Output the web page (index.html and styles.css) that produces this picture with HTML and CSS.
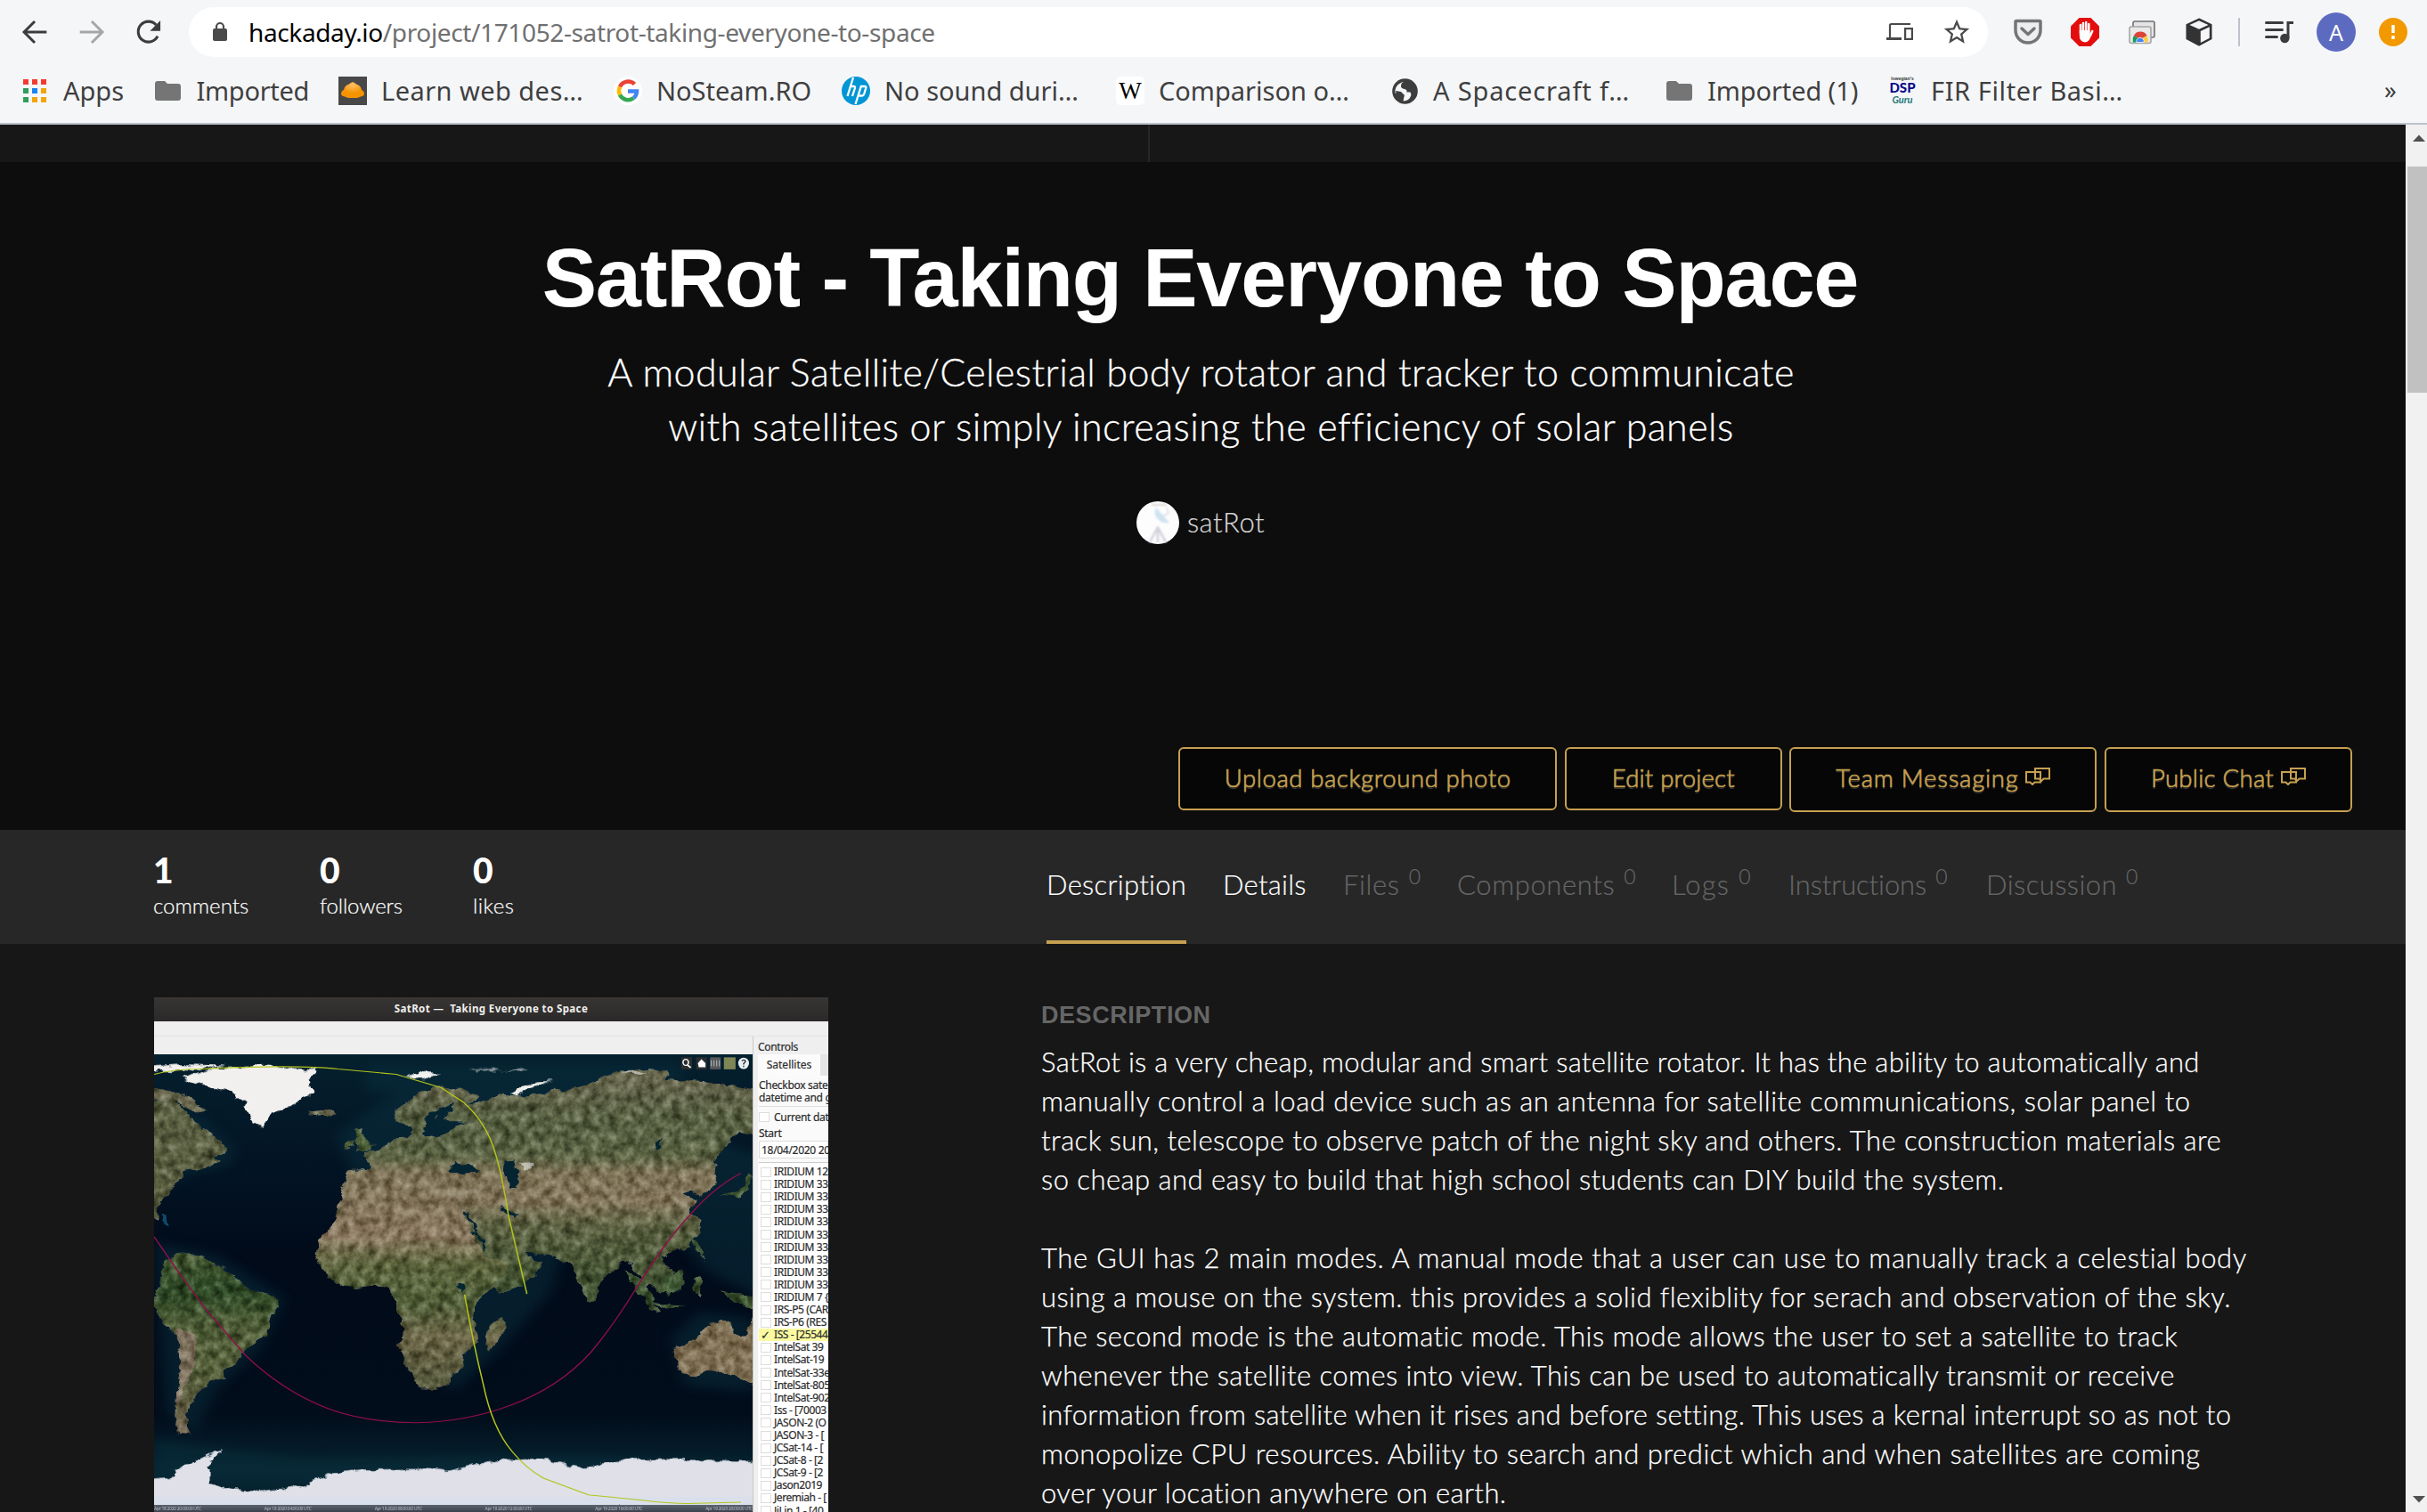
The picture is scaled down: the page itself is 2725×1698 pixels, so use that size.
FILE: index.html
```html
<!DOCTYPE html>
<html lang="en">
<head>
<meta charset="utf-8">
<title>SatRot - Taking Everyone to Space</title>
<link rel="stylesheet" href="styles.css">
</head>
<body>
<header class="chrome">
  <div class="toolbar">
    <nav class="nav">
      <span class="cell"><svg width="32" height="32" viewBox="0 0 24 24"><path d="M22 12H3.5M12 3l-9 9 9 9" fill="none" stroke="#3c3c3c" stroke-width="2.2"/></svg></span>
      <span class="cell"><svg width="32" height="32" viewBox="0 0 24 24"><path d="M2 12h18.500M12 3l9 9-9 9" fill="none" stroke="#a6a6a6" stroke-width="2.2"/></svg></span>
      <span class="cell"><svg width="32" height="32" viewBox="0 0 24 24"><path d="M19.500 15.500A8.600 8.600 0 1 1 18.200 6" fill="none" stroke="#3c3c3c" stroke-width="2.3"/><path d="M21.800 2.300v8.700h-8.700z" fill="#3c3c3c"/></svg></span>
    </nav>
    <div class="omnibox">
      <svg class="lock" width="18" height="24" viewBox="0 0 18 24"><rect x="1" y="8" width="16" height="14" rx="2" fill="#4a4a4a"/><path d="M5 9V6a4 4 0 0 1 8 0v3" fill="none" stroke="#4a4a4a" stroke-width="2.200"/></svg>
      <span class="url">hackaday.io<span class="path">/project/171052-satrot-taking-everyone-to-space</span></span>
      <span class="cell"><svg width="30" height="22" viewBox="0 0 30 22"><path d="M4 17V3.500Q4 2 5.500 2H27" fill="none" stroke="#4a4a4a" stroke-width="2.200"/><path d="M0 17h17v3H0z" fill="#4a4a4a"/><rect x="21.100" y="7.100" width="7.800" height="11.800" fill="none" stroke="#4a4a4a" stroke-width="2.200"/></svg></span>
      <span class="cell"><svg width="34" height="34" viewBox="0 0 24 24"><path d="M22 9.240l-7.190-.62L12 2 9.190 8.630 2 9.240l5.460 4.730L5.820 21 12 17.270 18.180 21l-1.630-7.030L22 9.240zM12 15.400l-3.760 2.270 1-4.280-3.320-2.880 4.380-.38L12 6.100l1.710 4.040 4.380.38-3.320 2.880 1 4.280L12 15.400z" fill="#4a4a4a"/></svg></span>
    </div>
    <div class="extensions">
      <span class="cell"><svg width="32" height="30" viewBox="0 0 32 30"><path d="M3 2.500h26q1 0 1 1V13a14 14 0 0 1-28 0V3.500q0-1 1-1z" fill="#eceeef" stroke="#757575" stroke-width="3.500"/><path d="M9 11l7 6.500 7-6.500" fill="none" stroke="#757575" stroke-width="3.500" stroke-linecap="round" stroke-linejoin="round"/></svg></span>
      <span class="cell"><svg width="32" height="32" viewBox="0 0 32 32"><path d="M9.500 0h13L32 9.500v13L22.500 32h-13L0 22.500v-13z" fill="#e40d0d"/><path d="M11 17V8M14 16V6M17.200 16V5M20.300 16V7M22 20l2.200-5" stroke="#fff" stroke-width="2.500" stroke-linecap="round"/><path d="M9.800 14h11.700v3l1.500 1q-1 9-7 9.500-6.500-.5-6.200-8z" fill="#fff"/></svg></span>
      <span class="cell"><svg width="30" height="27" viewBox="0 0 30 27"><rect x="5" y="1" width="24" height="18" rx="2" fill="#e5e5e5" stroke="#707070" stroke-width="1.600"/><rect x="1" y="7" width="24" height="18.500" rx="2" fill="#e9e9e9" stroke="#a5a5a5" stroke-width="1.600"/><path d="M13 21.500L5.800 17a8.400 8.400 0 0 1 14.800 0z" fill="#db4437"/><path d="M13 21.500L5.800 17Q4 20 4.800 24.500H12z" fill="#0f9d58"/><path d="M13 21.500l7.600-4.500q1.800 4 1 7.500H13z" fill="#ffcd40"/><path d="M8.800 24.500a4.300 4.300 0 1 1 8.400 0z" fill="#4285f4" stroke="#fff" stroke-width=".8"/></svg></span>
      <span class="cell"><svg width="32" height="34" viewBox="0 0 32 34"><path d="M16 2.500L29.500 9v15.500L16 31.500 2.500 24.500V9z" fill="#333" stroke="#333" stroke-width="2"/><path d="M16 4.200L26.500 9 16 13.800 5.500 9z" fill="#f5f6f8"/><path d="M17.800 16l10-4.700v12.500l-10 5.200z" fill="#f5f6f8"/></svg></span>
      <span class="divider"></span>
      <span class="cell"><svg width="32" height="26" viewBox="0 0 32 26"><path d="M1.500 2.500h18M1.500 10.500h18M1.500 18.500h12" stroke="#3c3c3c" stroke-width="3" stroke-linecap="round"/><circle cx="22.300" cy="20" r="5.200" fill="#3c3c3c"/><path d="M26 20V2.500h6" fill="none" stroke="#3c3c3c" stroke-width="3"/></svg></span>
      <span class="cell"><span class="profile">A</span></span>
      <span class="cell"><svg width="32" height="32" viewBox="0 0 32 32"><circle cx="16" cy="16" r="16" fill="#f29900"/><path d="M14.300 8h3.400v9h-3.400zM14.300 20h3.400v4h-3.400z" fill="#fff"/></svg></span>
    </div>
  </div>
  <div class="bookmarks">
    <span class="bm w-apps"><span class="fav"><svg width="26" height="26" viewBox="0 0 26 26"><path d="M0 0h6v6H0zM10 0h6v6h-6zM20 0h6v6h-6z" fill="#f33b30"/><path d="M0 10h6v6H0zM0 20h6v6H0z" fill="#2f9e5a"/><path d="M10 10h6v6h-6z" fill="#1a84f2"/><path d="M20 10h6v6h-6zM20 20h6v6h-6zM10 20h6v6h-6z" fill="#f2a60c"/></svg></span>Apps</span>
    <span class="bm w-imp"><span class="fav"><svg width="29" height="24" viewBox="0 0 29 24"><path d="M3 1h8l3 3h12q3 0 3 3v13q0 3-3 3H3q-3 0-3-3V4q0-3 3-3z" fill="#757575"/></svg></span><span class="ls-imp">Imported</span></span>
    <span class="bm w-learn"><span class="fav"><svg width="32" height="32" viewBox="0 0 32 32"><defs><radialGradient id="shell" cy=".2"><stop offset="0" stop-color="#ffc265"/><stop offset="1" stop-color="#f59300"/></radialGradient></defs><rect width="32" height="32" fill="#484848"/><path d="M3 20q0-4 3-5 1-5 5-6l3-2 2-1 2 1 3 2q4 1 5 6 3 1 3 5-1 2-4 2.500l-4 1.500H11l-4-1.500Q4 22 3 20z" fill="url(#shell)"/></svg></span><span class="ls-learn">Learn web des…</span></span>
    <span class="bm w-steam"><span class="fav"><svg width="32" height="32" viewBox="0 0 32 32"><circle cx="16" cy="16" r="16" fill="#fff"/><g fill="none" stroke-width="4.500"><path d="M23.500 8.500A10.200 10.200 0 0 0 7 11.500" stroke="#ea4335"/><path d="M7 11.500a10.200 10.200 0 0 0 0 9" stroke="#fbbc05"/><path d="M7 20.500a10.200 10.200 0 0 0 15.500 3.500" stroke="#34a853"/><path d="M22.500 24a10.200 10.200 0 0 0 3.500-7.500H16" stroke="#4285f4"/></g></svg></span>NoSteam.RO</span>
    <span class="bm w-wide"><span class="fav"><svg width="32" height="32" viewBox="0 0 32 32"><circle cx="16" cy="16" r="16" fill="#0096d6"/><g fill="none" stroke="#fff" stroke-width="2.300"><path d="M13 1L6.500 22M9.500 11h4q2 0 1.400 2L12 22"/><path d="M15.500 31l6.300-20h4q2 0 1.400 2l-2 6.500q-.6 2-2.500 2h-4"/></g></svg></span>No sound duri…</span>
    <span class="bm w-wide"><span class="fav wiki">W</span>Comparison o…</span>
    <span class="bm w-wide"><span class="fav"><svg width="29" height="29" viewBox="0 0 29 29"><circle cx="14.500" cy="14.500" r="14.300" fill="#3d3d3d"/><path d="M14 3.500q-4 1-4 5 0 3 4 3.500 3 .5 2.500 3.500h4l1 3q-2 7-9 7l1-5q-1-3-4-3.500l-6-.5q-1-10 10.500-13z" fill="#f5f6f8"/><path d="M13 3q3-1 6 1l-3 3h-3zM4 14l6 1 4 4-3 6q-6-3-7-11z" fill="#3d3d3d"/></svg></span><span class="ls-space">A Spacecraft f…</span></span>
    <span class="bm w-imp1"><span class="fav"><svg width="29" height="24" viewBox="0 0 29 24"><path d="M3 1h8l3 3h12q3 0 3 3v13q0 3-3 3H3q-3 0-3-3V4q0-3 3-3z" fill="#757575"/></svg></span><span class="ls-imp1">Imported (1)</span></span>
    <span class="bm w-fir"><span class="fav dsp"><i>Iowegian's</i><b>DSP</b><em>Guru</em></span><span class="ls-fir">FIR Filter Basi…</span></span>
    <span class="more">»</span>
  </div>
</header>
<div class="viewport">
  <main class="page">
    <div class="strip"><div class="strip-left"></div></div>
    <section class="hero">
      <h1>SatRot - Taking Everyone to Space</h1>
      <p class="tagline"><span class="t1">A modular Satellite/Celestrial body rotator and tracker to communicate</span><span class="t2">with satellites or simply increasing the efficiency of solar panels</span></p>
      <div class="author">
        <svg width="48" height="48" viewBox="0 0 48 48"><defs><filter id="soft"><feGaussianBlur stdDeviation=".8"/></filter></defs><circle cx="24" cy="24" r="24" fill="#fdfdfe"/><g filter="url(#soft)"><path d="M22 7q-4 8 3 14 5 4 12 3z" fill="#cfe2f1"/><path d="M34 7l2 6-8 5" fill="none" stroke="#d8dde6" stroke-width="1.500"/><path d="M24 29L15 46M24 29l9 17M24 28v18" stroke="#d2cfda" stroke-width="2.500"/><path d="M17 4h17" stroke="#dcd6d3" stroke-width="2"/></g></svg>
        <span>satRot</span>
      </div>
      <div class="actions">
        <a class="btn b1"><span>Upload background photo</span></a>
        <a class="btn b2"><span>Edit project</span></a>
        <a class="btn b3"><span>Team Messaging</span><svg width="28" height="20" viewBox="0 0 28 20"><path d="M1 5h16v11.500h-6.500L8 19l-2.500-2.500H1zM11 1h16v11.500h-6.500L18 15l-2.500-2.500H11z" fill="none" stroke="#c5a050" stroke-width="2"/></svg></a>
        <a class="btn b4"><span>Public Chat</span><svg width="28" height="20" viewBox="0 0 28 20"><path d="M1 5h16v11.500h-6.500L8 19l-2.500-2.500H1zM11 1h16v11.500h-6.500L18 15l-2.500-2.500H11z" fill="none" stroke="#c5a050" stroke-width="2"/></svg></a>
      </div>
    </section>
    <section class="bar">
      <div class="stats">
        <div><strong>1</strong><span>comments</span></div>
        <div><strong>0</strong><span class="ls-fol">followers</span></div>
        <div><strong>0</strong><span class="ls-likes">likes</span></div>
      </div>
      <nav class="tabs">
        <a class="on"><span>Description</span></a>
        <a class="on2"><span>Details</span></a>
        <a class="ls-files">Files<sup>0</sup></a>
        <a class="ls-comp">Components<sup>0</sup></a>
        <a class="ls-logs">Logs<sup>0</sup></a>
        <a class="ls-inst">Instructions<sup>0</sup></a>
        <a class="ls-disc">Discussion<sup>0</sup></a>
      </nav>
    </section>
    <section class="content">
      <figure class="shot">
        <div class="shot-title">SatRot —&nbsp; Taking Everyone to Space</div>
        <div class="shot-menu"></div>
        <div class="shot-body">
          <div class="shot-left">
            <svg class="map" width="672" height="506" viewBox="26 198 1334 1350" preserveAspectRatio="none">
              <defs>
                <filter id="terrain" x="-5%" y="-5%" width="110%" height="110%" color-interpolation-filters="sRGB">
                  <feTurbulence type="fractalNoise" baseFrequency=".035" numOctaves="4" seed="4" result="n"/>
                  <feDisplacementMap in="SourceGraphic" in2="n" scale="22" xChannelSelector="R" yChannelSelector="G" result="d"/>
                  <feTurbulence type="fractalNoise" baseFrequency=".05 .035" numOctaves="5" seed="9" result="m"/>
                  <feColorMatrix in="m" type="matrix" values="1.100 0 0 0 -.08 1.100 0 0 0 -.08 1.100 0 0 0 -.08 0 0 0 0 1" result="g"/>
                  <feBlend in="g" in2="d" mode="soft-light" result="b"/>
                  <feComposite in="b" in2="d" operator="in"/>
                </filter>
                <filter id="rough" x="-5%" y="-5%" width="110%" height="110%" color-interpolation-filters="sRGB"><feTurbulence type="fractalNoise" baseFrequency=".04" numOctaves="4" seed="2" result="n"/><feDisplacementMap in="SourceGraphic" in2="n" scale="22" xChannelSelector="R" yChannelSelector="G"/></filter>
                <filter id="haze" x="-20%" y="-20%" width="140%" height="140%" color-interpolation-filters="sRGB"><feGaussianBlur stdDeviation="16"/></filter>
                <linearGradient id="eu" gradientUnits="userSpaceOnUse" x1="0" y1="280" x2="0" y2="900"><stop offset="0" stop-color="#69694f"/><stop offset=".2" stop-color="#5a6344"/><stop offset=".36" stop-color="#5f6747"/><stop offset=".44" stop-color="#81765a"/><stop offset=".58" stop-color="#85785e"/><stop offset=".7" stop-color="#5d6343"/><stop offset="1" stop-color="#435533"/></linearGradient>
                <linearGradient id="af" gradientUnits="userSpaceOnUse" x1="0" y1="600" x2="0" y2="1160"><stop offset="0" stop-color="#83765b"/><stop offset=".26" stop-color="#8c7b62"/><stop offset=".4" stop-color="#616840"/><stop offset=".6" stop-color="#516039"/><stop offset=".8" stop-color="#706a4b"/><stop offset="1" stop-color="#5b5d40"/></linearGradient>
                <linearGradient id="sa" gradientUnits="userSpaceOnUse" x1="0" y1="800" x2="0" y2="1330"><stop offset="0" stop-color="#485c34"/><stop offset=".2" stop-color="#2e4a26"/><stop offset=".4" stop-color="#505f38"/><stop offset=".7" stop-color="#59623d"/><stop offset="1" stop-color="#766853"/></linearGradient>
                <linearGradient id="sea" x1="0" y1="0" x2="0" y2="1"><stop offset="0" stop-color="#05202e"/><stop offset=".2" stop-color="#031626"/><stop offset=".45" stop-color="#010b1a"/><stop offset=".8" stop-color="#020d1b"/><stop offset=".92" stop-color="#06222f"/></linearGradient>
              </defs>
              <rect x="26" y="198" width="1334" height="1350" fill="url(#sea)"/>
              <g filter="url(#haze)" fill="#0a303e" opacity=".5"><path d="M26 330l110 60 70 90-10 50-100 30-70 60zM430 440l60 170-30 80 60 160 80 20 30 200 60 140 100-120 120-180 50-240 100 20 40 120 60-120 100 160 160 100 100-30V560L900 300 600 280z"/><path d="M26 760l140 40 150 130-60 160-90 110-50 130-60-60zM1180 1050l60-80 120 20v220l-150-20zM500 230h700v80H500z"/><path d="M26 1350l330 60 600-10 400 20v60H26z"/></g>
              <g filter="url(#terrain)">
                <path fill="#5d6244" d="M15 330l56 10 30 30 20 35 50 45 15 40-30 10 20 22-40 15-40 14-10 20-20 22-12 30-15 30-3 40-14-8-12-25-12-10V560zM46 395l50 2 28 50 45 22-30 5-70 10z"/>
                <path fill="#6a694f" d="M15 300l61 10 38 25 28 30-25 5-40-28-51-12zM370 365l40-5 20 12-25 14-30-6z"/>
                <path fill="url(#eu)" d="M458 545l50-3-6-32-4-20 30-8 26-22 20-18 20 5 12-15-12-24 20-8-8 32 24 12 44-6 26-25 30-10-40-2-18-10 20-28 4-16-28 14-20 38-14 22-12 20-18-4-12-26-22-8-8-34 30-28 34-34 40-14 54 14 30 18-16 14-24 6 48-4 36-24 42 6 60-4 22-20 18 14 60-28 60-36 80-8 40 12-16 20 90 8 130 24 0 130-30 6-24-8-18 26-12 30-24 30 10 44-14 36-22 24-20-16-20 8 26 22-10 30 22 26-4 38-26 40-40 26-20 8 22 36 10 34-18 30-18 4-16-24-10 12 12 40 16 34-18-8-18-36-8-60-20-40-18-4-22 20-30 40-8 34-12 24-16-30-16-50-10-34-30-20-30-8-40-4 10 18 28 10-22 44-48 36-30 12-14-30-20-46-24-50-6-34 14-28-60 4-20-14-2-20-30 6-14-24-20-20-18-26-10 4 20 28 22 20-18 4-8-22-30-28-24-8-22 12-14 28-30 18-34-4z"/>
                <path fill="#4d6038" d="M470 425l20-5 6 28 22 24-6 12-40 6 10-18-6-18zM452 462l20-8 2 20-20 10z"/>
                <path fill="url(#af)" d="M466 605l40-4 66-6 4 30 52 18 14-14 60 12 12 40 24 60 30 66 46 12-10 40-46 60-20 40 4 60 6 40-30 32-4 40-36 56-26 14-32-2-14-34-24-56-10-40 14-50-18-46-8-50-6-26-36-4-50 8-44-22-24-34-14-40 6-50 24-44 24-30 10-36zM804 988l4 30-24 66-14 4-6-30 8-44z"/>
                <path fill="url(#sa)" d="M56 812l32-18 50 10 50 40 50 60 54 20 14 24-22 40-8 50-40 34-24 40-30 36 2 20-36 12-20 26-16 30-12 40-2 40 16 20-30-4-12-50 6-70 12-70-2-70-10-34-38-40-18-60 14-44z"/>
                <path fill="#80735f" d="M74 1016l36 16 12 30-4 60-20 60-16 70-8-10 10-110-4-60z"/>
                <path fill="#827357" d="M1184 1078l46-26 30-44 34-12 20 10 6 28 24 4 12-50 20 60v150l-50-30-20-16-46-4-30 14-30-6z"/>
                <path fill="#3e5732" d="M1155 880l34-34 20 8-8 50-26 16-20-16zM1074 845l20 12 44 70-6 14-30-30zM1130 940l80 16-50 4zM1230 870l20 4-10 50-10-20zM1290 905l78 22v40l-50-30zM1222 740l14 20 16 60-16-30zM985 815l8 16-8 8zM1290 620l50-22 10-46 8 6-4 44-24 22z"/>
              </g>
              <g filter="url(#rough)" fill="#042432"><path d="M680 545l20-24 24 6 28 24-40 10zM806 520l22-4 6 34 2 48-20 0-4-40zM716 668l10 6 44 114-8-4zM800 650l40 34-10 6-34-30zM708 886l10 12-10 16-8-14zM1140 480l22-34-8 30z"/><path d="M630 395l12-26 40-6-28 22-6 30 40 6-60 6z"/></g>
              <g filter="url(#rough)" fill="#f1f0ee"><path d="M90 270l70-30 120-8 110 14-20 30 10 40-40 26-50 30-22 44-20-8-20-62-30-34-60-20z"/><path d="M26 234l60-6 100 4-80 14-80 4zM836 322l-14-8 30-26 60-12-50 24zM584 264l30-14 50 4-40 16z"/><path opacity=".6" d="M730 248l50-8 20 6zM800 246l60-4-20 8zM1066 252l40-6 20 12-30 2zM836 524l34-4 4 16-20 8z"/><path fill="#dfe0e8" d="M16 1470l50-6 10-20 50-34 30-18 24-6-30 28 0 70 50 16 60 8 90-16 80-40 60-10 150-2 40 6 90-28 120-10 90 30 80-24 150-4 160 8v136H16z"/></g>
              <rect x="26" y="1525" width="1334" height="23" fill="#d5dfec" opacity=".7"/>
              <path d="M42 672l12 14 10 26-14-4-8-14z" fill="#17638c" opacity=".7" filter="url(#rough)"/>
              <g fill="none" stroke-width="3"><path d="M26 744L80 850l60 110 90 140q70 90 150 140 90 60 230 62 110-2 210-52 110-55 180-160 50-80 100-190 70-150 120-220 50-80 114-126" stroke="#8e0f49"/><path d="M26 258q40-15 100-16 220-14 310 0l130 16 100 40 50 44q50 60 70 150 16 70 30 190l41 234M718 918q20 150 42 270 20 130 64 200 30 50 70 80l100 50 120 16q60 10 100 10l120-4" stroke="#b3c51c"/></g>
              <g><rect x="1201" y="207" width="24" height="36" fill="#2b2d30"/><rect x="1234" y="207" width="24" height="36" fill="#2b2d30"/><rect x="1265" y="207" width="24" height="36" fill="#55585b"/><rect x="1296" y="207" width="26" height="36" fill="#7f8655"/><ellipse cx="1340" cy="225" rx="12" ry="17" fill="#e8f1f4"/><ellipse cx="1211" cy="222" rx="6" ry="9" fill="none" stroke="#fff" stroke-width="3"/><path d="M1215 230l7 8" stroke="#fff" stroke-width="4"/><path d="M1238 225l8-12 9 12v12h-15z" fill="#fff"/><path d="M1268 216v18m6-18v18m6-18v18m6-18v18" stroke="#b6b8ba" stroke-width="2"/><path d="M1336 218q5-6 8 0 0 4-4 8v3m0 3v4" fill="none" stroke="#333" stroke-width="3"/></g>
            </svg>
            <div class="timeline"><span>Apr 18 2020 20:00:00 UTC</span><span>Apr 19 2020 04:00:00 UTC</span><span>Apr 19 2020 08:00:00 UTC</span><span>Apr 19 2020 12:00:00 UTC</span><span>Apr 19 2020 16:00:00 UTC</span><span>Apr 19 2020 20:00:00 UTC</span></div>
          </div>
          <aside class="side">
            <div class="s-head">Controls</div>
            <div class="s-tab"><span>Satellites</span></div>
            <div class="s-panel">
              <div class="s-info">Checkbox sate<br>datetime and g</div>
              <div class="s-cur"><i></i>Current dat</div>
              <div class="s-start">Start</div>
              <div class="s-date">18/04/2020 20</div>
              <ul>
                <li><i></i>IRIDIUM 12</li><li><i></i>IRIDIUM 33</li><li><i></i>IRIDIUM 33</li><li><i></i>IRIDIUM 33</li><li><i></i>IRIDIUM 33</li><li><i></i>IRIDIUM 33</li><li><i></i>IRIDIUM 33</li><li><i></i>IRIDIUM 33</li><li><i></i>IRIDIUM 33</li><li><i></i>IRIDIUM 33</li><li><i></i>IRIDIUM 7 {</li><li><i></i>IRS-P5 (CAR</li><li><i></i>IRS-P6 (RES</li><li class="sel"><i>✓</i>ISS - [25544</li><li><i></i>IntelSat 39</li><li><i></i>IntelSat-19</li><li><i></i>IntelSat-33e</li><li><i></i>IntelSat-805</li><li><i></i>IntelSat-902</li><li><i></i>Iss - [70003</li><li><i></i>JASON-2 (O</li><li><i></i>JASON-3 - [</li><li><i></i>JCSat-14 - [</li><li><i></i>JCSat-8 - [2</li><li><i></i>JCSat-9 - [2</li><li><i></i>Jason2019</li><li><i></i>Jeremiah - [</li><li><i></i>JiLin 1 - [40</li>
              </ul>
            </div>
          </aside>
        </div>
      </figure>
      <article class="desc">
        <h2>DESCRIPTION</h2>
        <p><span class="p1">SatRot is a very cheap, modular and smart satellite rotator. It has the ability to automatically and</span><span class="p2">manually control a load device such as an antenna for satellite communications, solar panel to</span><span class="p3">track sun, telescope to observe patch of the night sky and others. The construction materials are</span><span class="p4">so cheap and easy to build that high school students can DIY build the system.</span></p>
        <p><span class="p5">The GUI has 2 main modes. A manual mode that a user can use to manually track a celestial body</span><span class="p6">using a mouse on the system. this provides a solid flexiblity for serach and observation of the sky.</span><span class="p7">The second mode is the automatic mode. This mode allows the user to set a satellite to track</span><span class="p8">whenever the satellite comes into view. This can be used to automatically transmit or receive</span><span class="p9">information from satellite when it rises and before setting. This uses a kernal interrupt so as not to</span><span class="p10">monopolize CPU resources. Ability to search and predict which and when satellites are coming</span><span class="p11">over your location anywhere on earth.</span></p>
      </article>
    </section>
  </main>
  <div class="scrollbar"><svg width="24" height="47" viewBox="0 0 24 47"><path d="M8 19l7-7.500L22 19z" fill="#505050"/></svg><div class="thumb"></div><svg class="down" width="24" height="24" viewBox="0 0 24 24"><path d="M8 6h14l-7 7.500z" fill="#505050"/></svg></div>
</div>
</body>
</html>
```
FILE: styles.css
```css
* { box-sizing: border-box; }
body { margin: 0; width: 2725px; height: 1698px; overflow: hidden; background: #171717; font-family: "Noto Sans", sans-serif; }
h1, h2, p, ul, figure { margin: 0; padding: 0; }
svg { display: block; flex: none; }

/* browser chrome */
.chrome { height: 140px; background: #f5f6f8; border-bottom: 2px solid #bdc3ca; }
.toolbar { display: flex; align-items: center; height: 72px; }
.cell { width: 64px; flex: none; display: flex; align-items: center; justify-content: center; }
.nav { display: flex; width: 212px; padding-left: 7px; }
.omnibox { width: 2020px; height: 56px; border-radius: 28px; background: #fff; display: flex; align-items: center; padding: 0 3px 0 26px; }
.url { flex: 1; margin-left: 23px; font-size: 28px; letter-spacing: -.37px; line-height: 54px; color: #000; white-space: nowrap; }
.path { color: #707070; }
.extensions { display: flex; align-items: center; padding-left: 13px; }
.divider { width: 2px; height: 32px; margin: 0 12px; background: #bdc3ca; }
.profile { width: 44px; height: 44px; border-radius: 50%; background: #5c6bc0; color: #fff; font-size: 25px; line-height: 44px; text-align: center; }
.bookmarks { display: flex; height: 60px; padding-left: 23px; font-size: 29px; line-height: 58px; color: #3f3f3f; white-space: nowrap; }
.bm { display: flex; align-items: center; flex: none; }
.fav { width: 32px; height: 32px; margin-right: 16px; display: flex; align-items: center; justify-content: center; flex: none; }
.w-apps { width: 149.500px; }
.w-imp { width: 207.500px; }
.w-learn { width: 309px; }
.w-steam { width: 256px; }
.w-wide { width: 308px; }
.w-imp1 { width: 251px; }
.w-fir { width: 557px; }
.ls-imp { letter-spacing: -.3px; }
.ls-learn { letter-spacing: .45px; }
.ls-space { letter-spacing: .85px; }
.ls-imp1 { letter-spacing: -.1px; }
.ls-fir { letter-spacing: .6px; }
.wiki { background: #fff; border-radius: 5px; font: 27px/32px "Liberation Serif", serif; color: #000; }
.dsp { flex-direction: column; justify-content: flex-start; color: #0a0a8a; }
.dsp i { font: bold 5px/5px "Liberation Sans", sans-serif; color: #333; }
.dsp b { font: 900 15px/15px Lato, sans-serif; }
.dsp em { font: italic 700 11px/12px Lato, sans-serif; color: #1f7a78; }
.more { font-size: 27px; line-height: 57px; }

/* page */
.viewport { display: flex; height: 1558px; }
.page { width: 2701px; flex: none; font-family: Lato, sans-serif; overflow: hidden; }
.scrollbar { width: 24px; background: #f1f1f1; display: flex; flex-direction: column; }
.thumb { height: 254px; margin-left: 2px; background: #c1c1c1; }
.down { margin-top: auto; }
.strip { height: 42px; background: #171717; }
.strip-left { width: 1291px; height: 42px; border-right: 2px solid #272727; }
.hero { height: 750px; padding: 80px 60px 20px 0; background: #0d0d0d; display: flex; flex-direction: column; align-items: center; }
h1 { font: bold 92px/100px "Liberation Sans", sans-serif; letter-spacing: -1.180px; color: #fff; padding-left: 54px; white-space: nowrap; }
.tagline { margin-top: 25px; padding-left: 56px; font-weight: 300; font-size: 43px; line-height: 61px; color: #fff; text-align: center; -webkit-text-stroke: .3px #fff; }
.tagline span { display: block; white-space: nowrap; }
.t1 { letter-spacing: .39px; }
.t2 { letter-spacing: .46px; }
.author { display: flex; align-items: center; gap: 9px; height: 48px; margin-top: 54px; padding-left: 55px; color: #d8d8d8; font-weight: 300; font-size: 31px; letter-spacing: .5px; line-height: 46px; -webkit-text-stroke: .2px #d8d8d8; }
.author span { padding-bottom: 3px; }
.actions { margin-top: auto; align-self: flex-end; display: flex; align-items: flex-start; gap: 8.600px; }
.btn { display: flex; justify-content: center; height: 71px; border: 2px solid #c5a050; border-radius: 6px; background: #060606; color: #c5a050; font-weight: 300; font-size: 27.500px; line-height: 66px; white-space: nowrap; -webkit-text-stroke: .7px #c5a050; text-shadow: 0 2px 0 #333; }
.btn svg { margin: 21px 0 0 8px; }
.b1 { width: 425px; letter-spacing: .6px; }
.b2 { width: 244px; letter-spacing: .2px; }
.b3 { width: 345px; height: 73px; letter-spacing: .75px; }
.b4 { width: 278px; height: 73px; letter-spacing: .3px; }

.bar { display: flex; height: 128px; background: #272727; color: #fff; font-weight: 300; }
.stats { width: 1003px; margin-left: 172px; padding-top: 25px; display: grid; grid-template-columns: 187px 172px 100px; }
.stats strong { display: block; font-size: 39px; line-height: 40px; font-weight: 900; }
.stats span { display: block; margin-top: 6px; font-size: 24px; line-height: 28px; -webkit-text-stroke: .2px #fff; }
.ls-fol { letter-spacing: -.15px; }
.ls-likes { letter-spacing: .49px; }
.tabs { display: grid; grid-template-columns: 198px 135px 128px 241px 131px 222px 200px; font-size: 31px; line-height: 123px; color: #666; white-space: nowrap; }
.tabs a { display: flex; height: 128px; -webkit-text-stroke: .2px; }
.tabs sup { font-size: 23px; line-height: 105px; margin-left: 10px; vertical-align: baseline; }
.on, .on2 { color: #fff; }
.on span { height: 128px; border-bottom: 4px solid #c5a050; letter-spacing: .3px; }
.on2 { letter-spacing: .25px; }
.ls-files { letter-spacing: .63px; }
.ls-comp { letter-spacing: .6px; }
.ls-logs { letter-spacing: 1.190px; }
.ls-inst { letter-spacing: -.1px; }
.ls-disc { letter-spacing: .45px; }

.content { display: flex; height: 638px; background: #171717; }
.desc { margin-left: 239px; padding-top: 64px; color: #fff; font-weight: 300; font-size: 31px; line-height: 44px; }
h2 { font: bold 27px/32px "Liberation Sans", sans-serif; letter-spacing: .55px; color: #666; margin-bottom: 14px; }
.desc p { margin-bottom: 44px; -webkit-text-stroke: .25px #fff; }
.desc p span { display: block; white-space: nowrap; }
.p1 { letter-spacing: .31px; }
.p2 { letter-spacing: .52px; }
.p3 { letter-spacing: .45px; }
.p4 { letter-spacing: .47px; }
.p5 { letter-spacing: .64px; }
.p6 { letter-spacing: .42px; }
.p7 { letter-spacing: .46px; }
.p8 { letter-spacing: .43px; }
.p9 { letter-spacing: .33px; }
.p10 { letter-spacing: .54px; }
.p11 { letter-spacing: .42px; }

/* application screenshot */
.shot { width: 757px; height: 578px; margin: 60px 0 0 173px; overflow: hidden; background: #efefef; font-family: "Noto Sans", sans-serif; color: #2c2c2c; }
.shot-title { height: 27px; background: linear-gradient(#383634, #2b2929); color: #f0efec; text-align: center; font-size: 11.500px; line-height: 26px; font-weight: 700; letter-spacing: .4px; }
.shot-menu { height: 17px; border-bottom: 1px solid #e2e2e2; }
.shot-body { display: flex; }
.shot-left { width: 672px; flex: none; padding-top: 20px; }
.timeline { height: 8px; background: linear-gradient(#5c6470, #3a424e); display: flex; justify-content: space-between; font-size: 5px; line-height: 8px; letter-spacing: -.3px; color: #b8bec6; white-space: nowrap; overflow: hidden; }
.side { width: 85px; padding-left: 5px; flex: none; overflow: hidden; font-size: 12px; white-space: nowrap; border-left: 1px solid #c8c8c8; letter-spacing: -.3px; -webkit-text-stroke: .2px; }
.s-head { height: 20px; line-height: 24px; }
.s-tab { height: 24px; background: #e4e4e4; }
.s-tab span { display: block; width: 70px; height: 24px; line-height: 24px; background: #fbfbfb; text-align: center; letter-spacing: 0; }
.s-panel { background: #fafafa; padding-left: 1px; height: 520px; }
.s-info { height: 35px; padding-top: 4px; line-height: 14px; border-bottom: 1px solid #ddd; }
.s-cur { display: flex; align-items: center; height: 22px; gap: 5px; }
.s-cur i, .side li i { width: 12px; height: 11px; flex: none; border: 1px solid #ddd; background: #fff; }
.s-start { height: 16px; line-height: 16px; }
.s-date { height: 20px; line-height: 19px; padding-left: 2px; border: 1px solid #ddd; background: #fff; }
.side ul { list-style: none; margin-top: 4px; border-top: 1px solid #ccc; padding-top: 3px; background: #fff; }
.side li { display: flex; align-items: center; gap: 3px; height: 14.100px; line-height: 14px; padding-left: 2px; letter-spacing: -.43px; }
.side .sel { background: #fbfaa0; }
.side .sel i { background: none; border: 0; font: bold 13px/11px "DejaVu Sans", sans-serif; }
```
